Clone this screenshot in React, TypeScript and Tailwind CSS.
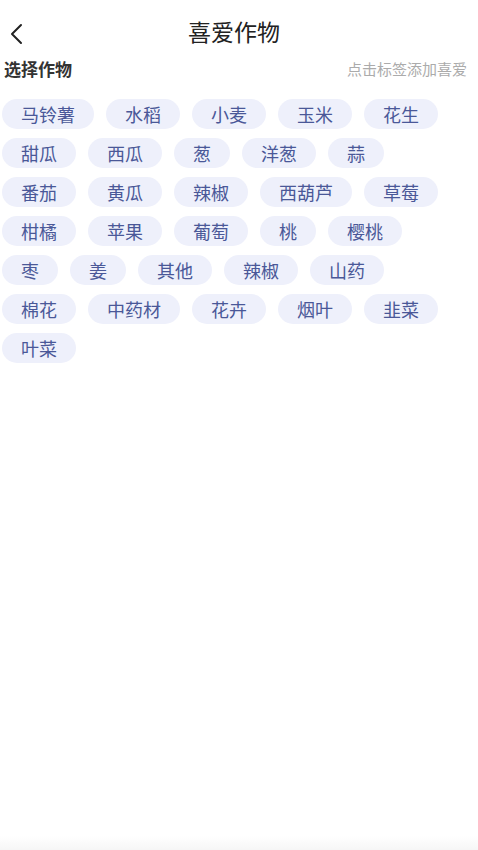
import React from "react";

const crops = [
  "马铃薯", "水稻", "小麦", "玉米", "花生",
  "甜瓜", "西瓜", "葱", "洋葱", "蒜",
  "番茄", "黄瓜", "辣椒", "西葫芦", "草莓",
  "柑橘", "苹果", "葡萄", "桃", "樱桃",
  "枣", "姜", "其他", "辣椒", "山药",
  "棉花", "中药材", "花卉", "烟叶", "韭菜",
  "叶菜",
];

const font = { fontFamily: '"Noto Sans CJK SC", "Noto Sans", sans-serif' };

const App = () => {
  return (
    <div className="flex min-h-[850px] flex-col bg-white" style={font}>
      {/* header */}
      <div className="relative flex h-[52px] items-center justify-center pt-[10px]">
        <button className="absolute left-[6px] top-[20px] p-[2px]">
          <svg width="16" height="24" viewBox="0 0 16 24" fill="none">
            <path d="M13 3 L4 12 L13 21" stroke="#222" strokeWidth="2" strokeLinecap="round" strokeLinejoin="round" />
          </svg>
        </button>
        <h1 className="mr-[10px] text-[23px] leading-none text-[#222]">喜爱作物</h1>
      </div>

      <div className="flex items-center justify-between pl-[4px] pr-[11px] pt-[8px]">
        <span className="text-[17px] font-bold leading-none text-[#333]">选择作物</span>
        <span className="text-[15px] leading-none text-[#ababab]">点击标签添加喜爱</span>
      </div>

      <div className="mt-[22px] flex w-[466px] flex-wrap gap-x-[12px] gap-y-[9px] pl-[2px]">
        {crops.map((name, i) => (
          <div
            key={i}
            className="flex h-[30px] items-center rounded-full bg-[#eef0fb] px-[19px] text-[18px] leading-none text-[#4a5898]"
          >
            {name}
          </div>
        ))}
      </div>

      <div className="flex-1" />
      <div className="h-[14px] bg-gradient-to-b from-white to-[#f6f6f6]" />
    </div>
  );
};

export default App;
